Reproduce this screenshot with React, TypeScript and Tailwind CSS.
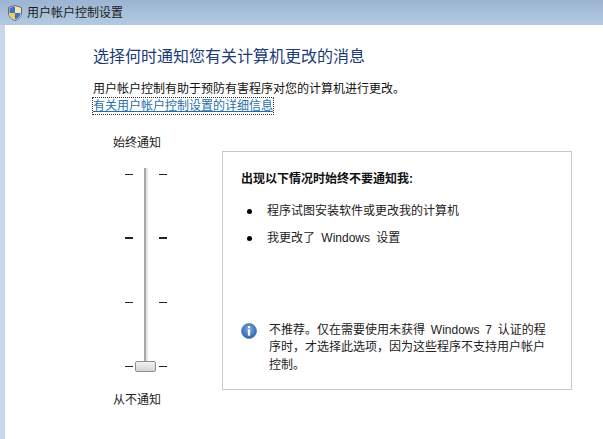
import React from 'react';

const FONT = "font-['Liberation_Sans','Noto_Sans_CJK_SC',sans-serif]";

const ShieldIcon = () => (
  <svg width="14" height="16" viewBox="0 0 14 16">
    <path d="M7 0.5 L13.5 2.5 V8 C13.5 12 10 14.5 7 15.5 C4 14.5 0.5 12 0.5 8 V2.5 Z" fill="#e8e4d0" stroke="#5b6b80" />
    <path d="M7 1.5 V8 H1.5 V3 Z" fill="#3f6fc4" />
    <path d="M7 8 H12.5 C12.3 11.5 9.5 13.5 7 14.5 Z" fill="#3f6fc4" />
    <path d="M7 1.5 L12.5 3 V8 H7 Z" fill="#f2e6a8" />
    <path d="M7 8 V14.5 C4.5 13.5 1.7 11.5 1.5 8 Z" fill="#f2cf4a" />
  </svg>
);

const InfoBall = () => (
  <svg width="16" height="16" viewBox="0 0 16 16" className="mt-[1px] shrink-0">
    <defs>
      <radialGradient id="ball" cx="50%" cy="40%" r="60%">
        <stop offset="0%" stopColor="#7fb0e6" />
        <stop offset="100%" stopColor="#2a62ac" />
      </radialGradient>
    </defs>
    <circle cx="8" cy="8" r="7.5" fill="url(#ball)" stroke="#5f7fa8" strokeWidth="0.8" />
    <rect x="6.9" y="3" width="2.2" height="2.2" fill="#fff" />
    <rect x="6.9" y="6.4" width="2.2" height="6.2" fill="#fff" />
  </svg>
);

const Tick = ({ bold }: { bold?: boolean }) => (
  <div className="flex h-[2px] items-center justify-center gap-[26px]">
    <span className={`w-[8px] bg-[#222] ${bold ? 'h-[2px]' : 'h-px'}`} />
    <span className={`w-[8px] bg-[#222] ${bold ? 'h-[2px]' : 'h-px'}`} />
  </div>
);

const Slider = () => (
  <div className="relative flex h-[204px] w-[60px] flex-col justify-between pt-[5px] pb-[5px]">
    <div className="absolute top-0 bottom-0 left-[28px] w-[4px] border-l-2 border-[#a8a8a8] bg-[#e6e6e6]" />
    <Tick />
    <Tick bold />
    <Tick />
    <Tick />
    <div className="absolute bottom-0 left-[19px] h-[11px] w-[21px] rounded-[2px] border border-[#8a8f96] bg-gradient-to-b from-[#f2f2f2] to-[#d4d4d4]" />
  </div>
);

const Bullet = ({ children }: { children: React.ReactNode }) => (
  <li className="flex items-center leading-[18px]">
    <span className="ml-[6px] mr-[15px] h-[5px] w-[5px] rounded-full bg-black" />
    <span className="[word-spacing:3px]">{children}</span>
  </li>
);

export default function App() {
  return (
    <div className={`${FONT} flex h-[439px] w-[603px] flex-col overflow-hidden`}>
      <div className="flex h-[25px] items-center gap-[5px] bg-gradient-to-b from-[#9bb4d0] to-[#b4cae2] pl-[8px] text-[12px] text-[#1a1a1a]">
        <ShieldIcon />
        <span>用户帐户控制设置</span>
      </div>
      <div className="flex-1 border-l-[5px] border-[#c6d8ea] bg-white pl-[88px] pt-[22px]">
        <h1 className="text-[16px] leading-[20px] font-normal text-[#1c3a78]">选择何时通知您有关计算机更改的消息</h1>
        <p className="mt-[14px] text-[12px] leading-[17px] text-[#111]">用户帐户控制有助于预防有害程序对您的计算机进行更改。</p>
        <a className="block w-fit text-[12px] leading-[16px] text-[#1f6fa8] underline outline-1 outline-dotted outline-[#333]">有关用户帐户控制设置的详细信息</a>
        <div className="mt-[21px] flex">
          <div className="flex w-[129px] flex-col">
            <div className="pl-[20px] text-[12px] leading-[16px] text-[#222]">始终通知</div>
            <div className="mt-[17px] ml-[23px]"><Slider /></div>
            <div className="mt-[20px] pl-[20px] text-[12px] leading-[16px] text-[#222]">从不通知</div>
          </div>
          <div className="mt-[16px] flex h-[239px] w-[350px] flex-col border border-[#c8c8c8] px-[18px] pt-[18px] text-[12px] text-[#222]">
            <div className="font-bold leading-[18px] text-[#111]">出现以下情况时始终不要通知我:</div>
            <ul className="mt-[14px] flex flex-col gap-[9px]">
              <Bullet>程序试图安装软件或更改我的计算机</Bullet>
              <Bullet>我更改了 Windows 设置</Bullet>
            </ul>
            <div className="mt-auto mb-[15px] flex gap-[12px]">
              <InfoBall />
              <p className="w-[280px] leading-[17.5px] [word-spacing:2.5px]">不推荐。仅在需要使用未获得 Windows 7 认证的程序时，才选择此选项，因为这些程序不支持用户帐户控制。</p>
            </div>
          </div>
        </div>
      </div>
    </div>
  );
}
